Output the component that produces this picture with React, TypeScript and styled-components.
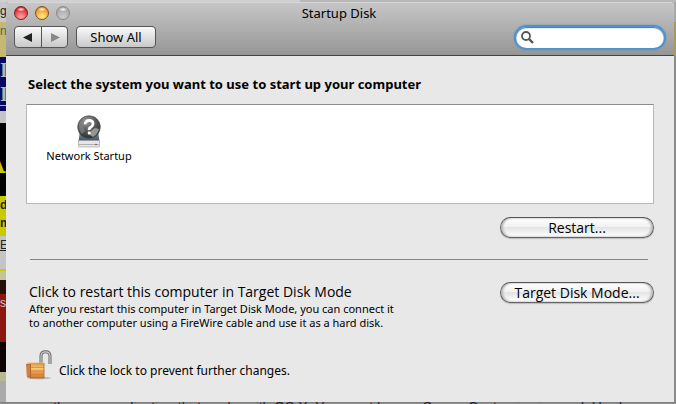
import React from "react";
import styled, { createGlobalStyle } from "styled-components";

const Global = createGlobalStyle`
  * { box-sizing: border-box; }
  html, body { margin: 0; }
  body { font-family: "Noto Sans", "Open Sans", sans-serif; font-size: 13px; color: #000; background: #bdbdbd; }
  button, input { font: inherit; color: inherit; margin: 0; }
  p, h1, h2, ul { margin: 0; padding: 0; }
`;

const Desktop = styled.div`
  display: grid;
  grid-template-columns: 6px minmax(0, 1fr) 2px;
  grid-template-rows: 2px 1fr 2px;
  height: 100vh;
  overflow: hidden;
`;

const TopEdge = styled.div`
  grid-column: 1 / -1;
  background: linear-gradient(90deg, #d0d0d0 0 300px, #b8b8b8 300px);
`;

const LeftEdge = styled.div`
  overflow: hidden;
  font: 12px/18px "Liberation Sans", sans-serif;
`;

const RightEdge = styled.div`
  background: linear-gradient(#aaa 0 20px, #a89a5a 20px 54px, #8b8b8b 54px);
`;

const BottomEdge = styled.div`
  grid-column: 1 / -1;
  overflow: hidden;
  padding-left: 40px;
  font: 14px/10px "Liberation Sans", sans-serif;
  white-space: nowrap;
  background: linear-gradient(#757575, #9b9b9b);
  color: #20202a;
`;

const Patch = styled.div<{ $h: number; $bg: string; $fg?: string; $bold?: boolean }>`
  height: ${(p) => p.$h}px;
  overflow: hidden;
  white-space: nowrap;
  background: ${(p) => p.$bg};
  color: ${(p) => p.$fg ?? "#222"};
  font-weight: ${(p) => (p.$bold ? 700 : 400)};
`;

const Banner = styled(Patch)`
  font: 700 20px/26px "Liberation Serif", serif;
`;

const Poster = styled(Patch)`
  font: 700 40px/73px "Liberation Serif", serif;
  direction: rtl;
`;

const Window = styled.main`
  display: flex;
  flex-direction: column;
  min-width: 0;
  background: #e8e8e8;
  border-radius: 5px 5px 0 0;
  overflow: hidden;
`;

const Toolbar = styled.header`
  display: flex;
  flex-direction: column;
  height: 54px;
  padding: 0 10px 0 8px;
  border-top: 1px solid #d6d6d6;
  border-bottom: 1px solid #444;
  background: linear-gradient(#c6c6c6, #969696);
`;

const TitleBar = styled.div`
  display: grid;
  grid-template-columns: 1fr auto 1fr;
  align-items: center;
  height: 20px;
`;

const Lights = styled.div`
  display: flex;
  gap: 7px;
`;

const Light = styled.button<{ $edge: string; $mid: string; $glow: string }>`
  width: 14px;
  height: 14px;
  padding: 0;
  border: 1px solid ${(p) => p.$edge};
  border-radius: 50%;
  background:
    radial-gradient(ellipse 4px 2px at 50% 20%, #fff, #fff0),
    radial-gradient(circle at 50% 85%, ${(p) => p.$glow} 10%, ${(p) => p.$mid} 75%);
`;

const Title = styled.h1`
  font-size: 13px;
  font-weight: 400;
  line-height: 20px;
`;

const Tools = styled.div`
  display: flex;
  align-items: center;
  height: 28px;
`;

const NavGroup = styled.div`
  display: flex;
  margin-right: 8px;
  border: 1px solid #555;
  border-radius: 4px;
  background: linear-gradient(#fafafa, #c8c8c8);
`;

const NavButton = styled.button`
  display: grid;
  place-items: center;
  width: 26px;
  height: 20px;
  padding: 0;
  border: 0;
  background: none;
  & + & { border-left: 1px solid #555; }
`;

const ShowAll = styled.button`
  width: 80px;
  height: 22px;
  padding: 0;
  border: 1px solid #555;
  border-radius: 4px;
  background: linear-gradient(#fafafa, #c8c8c8);
  line-height: 18px;
`;

const Search = styled.label`
  display: flex;
  align-items: center;
  width: 148px;
  height: 21px;
  margin-left: auto;
  padding-left: 5px;
  border-radius: 11px;
  background: #fff;
  box-shadow: inset 0 1px 1px #46739f, 0 0 0 2px #4e92cf, 0 0 2px 2px #5b97cb;
`;

const SearchInput = styled.input`
  flex: 1;
  min-width: 0;
  padding: 0 8px 0 4px;
  border: 0;
  outline: 0;
  background: none;
`;

const Content = styled.div`
  display: flex;
  flex-direction: column;
  padding: 18px 20px 0;
`;

const Heading = styled.h2`
  margin-left: 2px;
  font-size: 13px;
  font-weight: 700;
  line-height: 20px;
`;

const DiskList = styled.ul`
  height: 100px;
  margin-top: 10px;
  padding: 10px 18px;
  border: 1px solid #b9b9b9;
  border-top-color: #8c8c8c;
  background: #fff;
  list-style: none;
`;

const Disk = styled.li`
  display: flex;
  flex-direction: column;
  align-items: center;
  width: 88px;
  font-size: 11px;
  line-height: 16px;
  white-space: nowrap;
`;

const Actions = styled.div`
  display: flex;
  justify-content: flex-end;
  padding-top: 13px;
`;

const Pill = styled.button`
  flex: none;
  width: 154px;
  height: 21px;
  padding: 0;
  border: 1px solid #666;
  border-top-color: #555;
  border-radius: 11px;
  background: linear-gradient(#fff, #f2f2f2 45%, #e4e4e4 50%, #fff);
  box-shadow: inset 2px 0 2px #bbb, inset -2px 0 2px #bbb, 0 1px 1px #bbb;
  font: 14px/18px "Open Sans", sans-serif;
`;

const Divider = styled.hr`
  width: calc(100% - 10px);
  height: 1px;
  margin: 21px 6px 0 4px;
  border: 0;
  background: #858585;
`;

const TargetRow = styled.section`
  display: flex;
  justify-content: space-between;
  align-items: flex-start;
  padding-top: 22px;
`;

const TargetText = styled.div`
  margin-left: 3px;
`;

const Lead = styled.p`
  font: 14px/20px "Open Sans", sans-serif;
`;

const Detail = styled.p`
  font-size: 11px;
  line-height: 14px;
`;

const LockRow = styled.div`
  display: flex;
  align-items: flex-end;
  gap: 7px;
  padding-top: 20px;
`;

const LockButton = styled.button`
  width: 26px;
  height: 30px;
  padding: 0;
  border: 0;
  background: none;
`;

const LockText = styled.p`
  font-size: 12px;
  line-height: 18px;
`;

const Arrow = ({ flip, fill }: { flip?: boolean; fill: string }) => (
  <svg width="10" height="10" viewBox="0 0 10 10" aria-hidden="true">
    <path d={flip ? "M1 1 10 5.5 1 10Z" : "M9 1 0 5.5 9 10Z"} fill={fill} />
  </svg>
);

const Magnifier = () => (
  <svg width="13" height="13" viewBox="0 0 13 13" fill="none" stroke="#555" aria-hidden="true">
    <circle cx="5" cy="5" r="4" strokeWidth="1.8" />
    <path d="M8 8 12 12" strokeWidth="2.4" />
  </svg>
);

const NetworkDisk = () => (
  <svg width="24" height="33" viewBox="0 0 24 33" aria-hidden="true">
    <defs>
      <radialGradient id="globe" cx=".4" cy=".25" r=".8">
        <stop offset="0" stopColor="#999" />
        <stop offset=".5" stopColor="#5a5a5a" />
        <stop offset="1" stopColor="#2a2a2a" />
      </radialGradient>
      <linearGradient id="drive" x2="0" y2="1">
        <stop offset="0" stopColor="#8a949d" />
        <stop offset="1" stopColor="#3b4f63" />
      </linearGradient>
    </defs>
    <path d="M3 15H21L22.5 27H1.5Z" fill="url(#drive)" />
    <path d="M1.5 25.5H22.5V31Q22.5 32 21.5 32H2.5Q1.5 32 1.5 31Z" fill="#e6e6e6" stroke="#999" strokeWidth=".6" />
    <path d="M2 29.5H22" stroke="#b0b0b0" />
    <circle cx="19" cy="29.5" r=".8" fill="#555" />
    <circle cx="12" cy="12" r="11.3" fill="url(#globe)" stroke="#444" strokeWidth=".6" />
    <path d="M2 9Q4 3 10 2L8 5 10 8 6 12 8 16 5 19Q1 15 2 9Z" fill="#888" opacity=".6" />
    <path d="M14 16 18 13 22 14Q21 19 16 22L13 20Z" fill="#aaa" opacity=".8" />
    <path d="M8.2 9.2Q8.2 5.5 12.2 5.5T16 9Q16 11 14 12T12.2 15" fill="none" stroke="#fff" strokeWidth="2.8" />
    <rect x="10.8" y="16.6" width="2.9" height="2.9" rx=".8" fill="#fff" />
  </svg>
);

const OpenLock = () => (
  <svg width="26" height="30" viewBox="0 0 26 30" aria-hidden="true">
    <defs>
      <linearGradient id="brass" x2="0" y2="1">
        <stop offset="0" stopColor="#e09a45" />
        <stop offset=".35" stopColor="#f9c878" />
        <stop offset=".6" stopColor="#e89c45" />
        <stop offset="1" stopColor="#cf7d30" />
      </linearGradient>
    </defs>
    <ellipse cx="13" cy="28" rx="12" ry="1.5" fill="#aaa" opacity=".7" />
    <path d="M15 14V6Q15 1.8 19.5 1.8T24 6V14" fill="none" stroke="#666" strokeWidth="3" />
    <path d="M15 14V6Q15 1.8 19.5 1.8T24 6V14" fill="none" stroke="#ccc" strokeWidth="1.2" />
    <path d="M0 14 5 13V28L1 27Z" fill="#b8602b" />
    <path d="M1 14.5V26.5M3 14.5V26.5" stroke="#f0b070" strokeWidth=".8" />
    <rect x="4.5" y="13.5" width="13.5" height="14.5" fill="url(#brass)" stroke="#ad6429" strokeWidth=".8" />
    <path d="M0 13.7 3 12.5H17L18.5 13.5" fill="#f0b778" />
    <path d="M5 17.5H18M5 21H18M5 24.5H18" stroke="#c77b30" strokeWidth=".6" />
  </svg>
);

export default function App() {
  return (
    <>
      <Global />
      <Desktop>
        <TopEdge />
        <LeftEdge aria-hidden="true">
          <Patch $h={20} $bg="#c8c8c8">g</Patch>
          <Patch $h={35} $bg="#c4b873" $fg="#55694a">n</Patch>
          <Banner $h={24} $bg="#070764" $fg="#b5b5a5">I</Banner>
          <Banner $h={24} $bg="#070764" $fg="#b5b5a5">I</Banner>
          <Patch $h={1} $bg="#aaa" />
          <Patch $h={5} $bg="#070764" />
          <Patch $h={12} $bg="#c4c4c4" />
          <Poster $h={73} $bg="#000" $fg="#c9c900">A</Poster>
          <Patch $h={18} $bg="#c9c900" $bold>dv</Patch>
          <Patch $h={22} $bg="#c9c900" $bold>m</Patch>
          <Patch $h={33} $bg="#c4c4c4"><u>E</u></Patch>
          <Patch $h={2} $bg="#c9c900" />
          <Patch $h={9} $bg="#c4c49b" />
          <Patch $h={14} $bg="#251008" />
          <Patch $h={48} $bg="#8b1710" $fg="#ccc">s</Patch>
          <Patch $h={30} $bg="#0c0202" />
          <Patch $h={9} $bg="#b9b990" />
          <Patch $h={40} $bg="#aaa" />
        </LeftEdge>
        <Window>
          <Toolbar>
            <TitleBar>
              <Lights>
                <Light aria-label="Close" $edge="#7c2023" $mid="#d9262c" $glow="#ff9a98" />
                <Light aria-label="Minimize" $edge="#8a4a1c" $mid="#e8902a" $glow="#ffe77d" />
                <Light aria-label="Zoom" $edge="#888" $mid="#a8a8a8" $glow="#c8c8c8" disabled />
              </Lights>
              <Title>Startup Disk</Title>
            </TitleBar>
            <Tools>
              <NavGroup>
                <NavButton aria-label="Back"><Arrow fill="#222" /></NavButton>
                <NavButton aria-label="Forward" disabled><Arrow flip fill="#888" /></NavButton>
              </NavGroup>
              <ShowAll>Show All</ShowAll>
              <Search>
                <Magnifier />
                <SearchInput type="text" aria-label="Search" />
              </Search>
            </Tools>
          </Toolbar>
          <Content>
            <Heading>Select the system you want to use to start up your computer</Heading>
            <DiskList>
              <Disk><NetworkDisk />Network Startup</Disk>
            </DiskList>
            <Actions><Pill>Restart...</Pill></Actions>
            <Divider />
            <TargetRow>
              <TargetText>
                <Lead>Click to restart this computer in Target Disk Mode</Lead>
                <Detail>After you restart this computer in Target Disk Mode, you can connect it<br />to another computer using a FireWire cable and use it as a hard disk.</Detail>
              </TargetText>
              <Pill>Target Disk Mode...</Pill>
            </TargetRow>
            <LockRow>
              <LockButton aria-label="Lock"><OpenLock /></LockButton>
              <LockText>Click the lock to prevent further changes.</LockText>
            </LockRow>
          </Content>
        </Window>
        <RightEdge />
        <BottomEdge aria-hidden="true">with some application that works with OS X. You must have a Server Customize in need. Hardware</BottomEdge>
      </Desktop>
    </>
  );
}
